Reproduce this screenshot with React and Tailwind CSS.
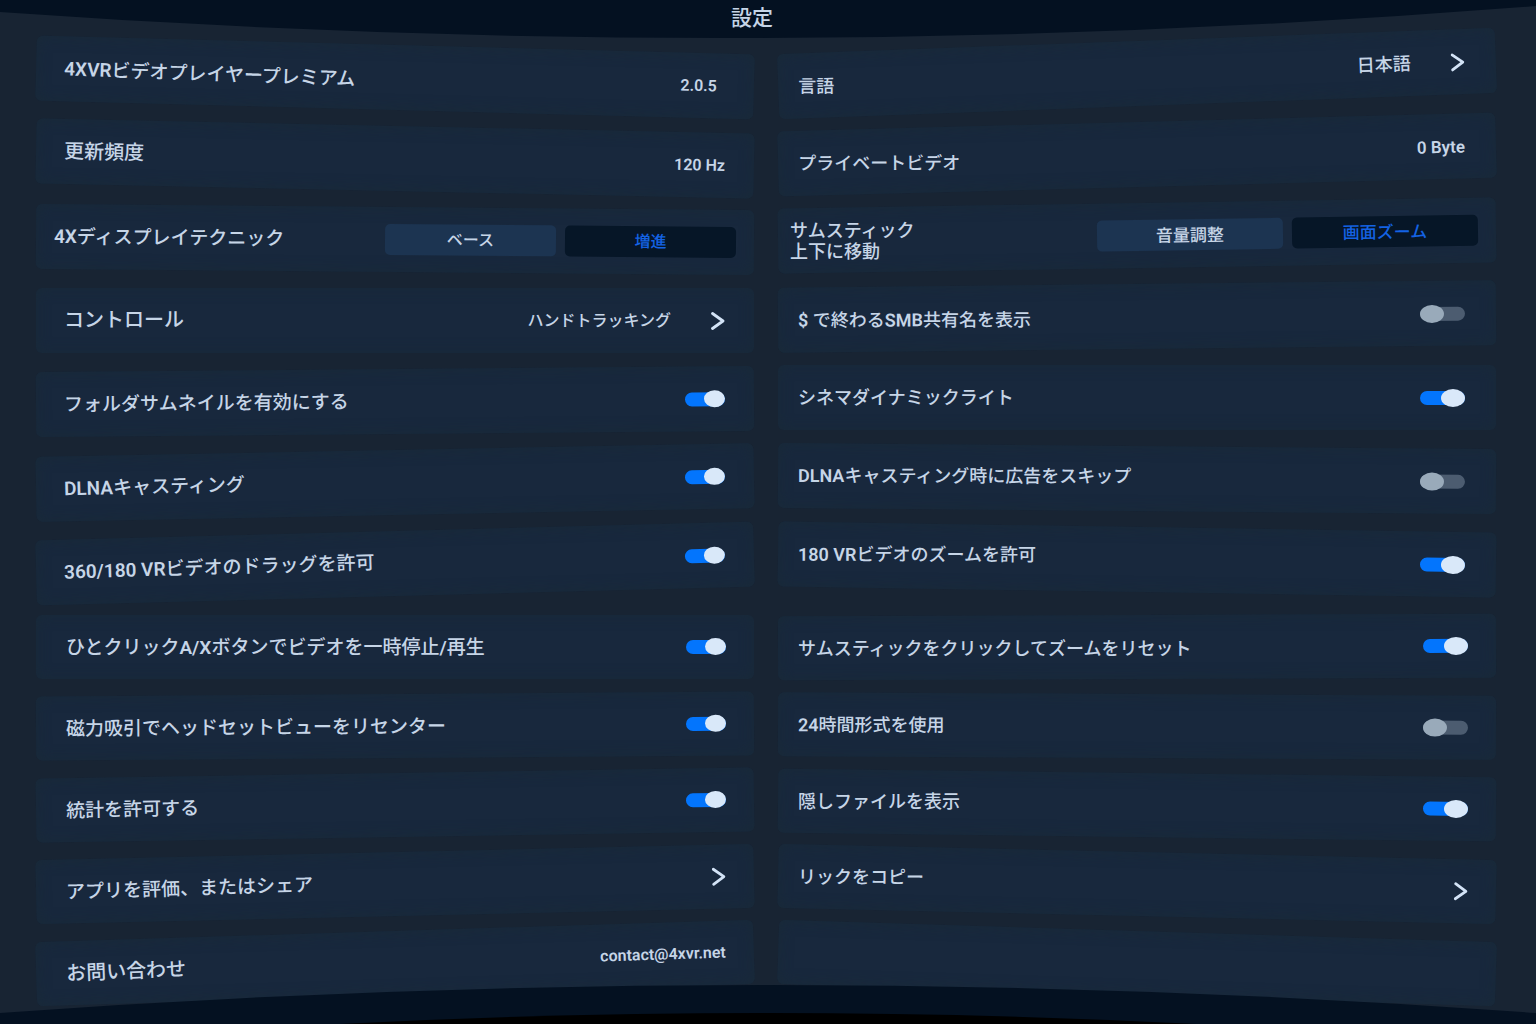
import { useState } from 'react'

// tilt follows the curved screen: rows lean towards the middle of the panel
const upperLeft = [
  { id: 'app', label: '4XVRビデオプレイヤープレミアム', size: 'text-[19px]', tilt: 'rotate-[1.5deg]', bend: 'rotate-[0.5deg]', type: 'text', value: '2.0.5', valueClass: 'text-[16px] mr-2' },
  { id: 'rate', label: '更新頻度', size: 'text-[20px]', tilt: 'rotate-[1.2deg]', type: 'text', value: '120 Hz', valueClass: 'text-[16px]' },
  { id: 'display', label: '4Xディスプレイテクニック', size: 'text-[19px]', tilt: 'rotate-[0.5deg]', type: 'choice', options: ['ベース', '増進'], width: 'w-[171px]', optionSize: 'text-[16px]' },
  { id: 'control', label: 'コントロール', size: 'text-[20px]', tilt: 'rotate-0', type: 'link', value: 'ハンドトラッキング', valueClass: 'text-[16px]' },
  { id: 'thumbs', label: 'フォルダサムネイルを有効にする', size: 'text-[19px]', tilt: 'rotate-[-0.5deg]', type: 'toggle', on: true },
  { id: 'dlna', label: 'DLNAキャスティング', size: 'text-[19px]', tilt: 'rotate-[-1.1deg]', bend: 'rotate-[-0.3deg]', type: 'toggle', on: true },
  { id: 'drag', label: '360/180 VRビデオのドラッグを許可', size: 'text-[19px]', tilt: 'rotate-[-1.5deg]', bend: 'rotate-[-0.3deg]', type: 'toggle', on: true },
]

const upperRight = [
  { id: 'lang', label: '言語', size: 'text-[18px]', tilt: 'rotate-[-2.1deg]', bend: 'rotate-[2deg]', type: 'link', value: '日本語', valueClass: 'text-[18px]' },
  { id: 'private', label: 'プライベートビデオ', size: 'text-[18px]', tilt: 'rotate-[-1.5deg]', bend: 'rotate-[1.3deg]', type: 'text', value: '0 Byte', valueClass: 'text-[17px]' },
  { id: 'stick', label: 'サムスティック\n上下に移動', size: 'text-[18px]', tilt: 'rotate-[-0.9deg]', bend: 'rotate-[0.9deg]', type: 'choice', options: ['音量調整', '画面ズーム'], width: 'w-[186px]', optionSize: 'text-[17px]' },
  { id: 'smb', label: '$ で終わるSMB共有名を表示', size: 'text-[18px]', tilt: 'rotate-[-0.6deg]', bend: 'rotate-[0.5deg]', type: 'toggle', on: false },
  { id: 'cinema', label: 'シネマダイナミックライト', size: 'text-[18px]', tilt: 'rotate-0', type: 'toggle', on: true },
  { id: 'skip', label: 'DLNAキャスティング時に広告をスキップ', size: 'text-[18px]', tilt: 'rotate-[0.5deg]', bend: 'rotate-[-0.4deg]', type: 'toggle', on: false },
  { id: 'zoom', label: '180 VRビデオのズームを許可', size: 'text-[18px]', tilt: 'rotate-[0.9deg]', bend: 'rotate-[-0.8deg]', type: 'toggle', on: true },
]

const lowerLeft = [
  { id: 'pause', label: 'ひとクリックA/Xボタンでビデオを一時停止/再生', size: 'text-[19px]', tilt: 'rotate-0', type: 'toggle', on: true },
  { id: 'recenter', label: '磁力吸引でヘッドセットビューをリセンター', size: 'text-[19px]', tilt: 'rotate-[-0.4deg]', type: 'toggle', on: true },
  { id: 'stats', label: '統計を許可する', size: 'text-[19px]', tilt: 'rotate-[-0.9deg]', bend: 'rotate-[-0.3deg]', type: 'toggle', on: true },
  { id: 'rateapp', label: 'アプリを評価、またはシェア', size: 'text-[19px]', tilt: 'rotate-[-1.3deg]', bend: 'rotate-[-0.4deg]', type: 'link' },
  { id: 'contact', label: 'お問い合わせ', size: 'text-[20px]', tilt: 'rotate-[-1.8deg]', bend: 'rotate-[-0.4deg]', type: 'mail', value: 'contact@4xvr.net' },
]

const lowerRight = [
  { id: 'reset', label: 'サムスティックをクリックしてズームをリセット', size: 'text-[18px]', tilt: 'rotate-[-0.2deg]', bend: 'rotate-[0.2deg]', type: 'toggle', on: true },
  { id: 'clock', label: '24時間形式を使用', size: 'text-[18px]', tilt: 'rotate-[0.3deg]', bend: 'rotate-[-0.2deg]', type: 'toggle', on: false },
  { id: 'hidden', label: '隠しファイルを表示', size: 'text-[18px]', tilt: 'rotate-[0.7deg]', bend: 'rotate-[-0.7deg]', type: 'toggle', on: true },
  { id: 'copy', label: 'リックをコピー', size: 'text-[18px]', tilt: 'rotate-[1.3deg]', bend: 'rotate-[-1.2deg]', type: 'link' },
  { id: 'empty', tilt: 'rotate-[1.8deg]', type: 'empty' },
]

function Chevron() {
  return (
    <svg className="w-[14px] h-5" viewBox="0 0 14 20" fill="none" stroke="#d3e3f6" strokeWidth="2.8" strokeLinecap="round" strokeLinejoin="round">
      <path d="M1.5 2.5 12 10 1.5 17.5" />
    </svg>
  )
}

// latin letters and digits are set heavier than the kana around them
function LabelText({ text }) {
  return text.split(/([A-Za-z0-9/$]+)/).map((part, i)=>(
    i % 2 ? <span key={i} className="font-semibold">{part}</span> : part
  ))
}

function Toggle({ id, on, wide }) {
  const [checked, setChecked] = useState(on)
  return (
    <input
      id={id}
      type="checkbox"
      role="switch"
      checked={checked}
      onChange={e=>setChecked(e.target.checked)}
      className={`${wide ? 'w-[45px] before:w-6 before:h-[18px]' : 'w-10 before:w-[21px] before:h-[17px]'} relative appearance-none shrink-0 h-[14px] rounded-full cursor-pointer bg-[#4c5c70] checked:bg-[#0375fd] before:absolute before:-top-[2px] before:left-0 before:rounded-[50%] before:bg-[#99aaba] checked:before:left-auto checked:before:right-0 checked:before:bg-[#d9e8f9]`}
    />
  )
}

function Choice({ id, options, width, optionSize }) {
  const [picked, setPicked] = useState(options[1])
  return (
    <div role="group" aria-labelledby={id} className="flex gap-[9px]">
      {options.map(o=>(
        <button
          key={o}
          aria-pressed={picked===o}
          onClick={()=>setPicked(o)}
          className={`${width} ${optionSize} h-[31px] rounded-[5px] leading-5 ${picked===o ? 'bg-[#061627] text-[#1463e4]' : 'bg-[#1c3451] text-[#c6d5e7]'}`}
        >
          {o}
        </button>
      ))}
    </div>
  )
}

function Row({ row, pad, widePad, height, wide }) {
  const isChoice = row.type === 'choice'
  const text = `${row.size} ${row.bend || ''} origin-left whitespace-pre leading-[21px]`
  return (
    <div className={`${height} ${isChoice ? widePad : pad} ${row.tilt} flex items-center justify-between rounded-md bg-[#18283d] shadow-[inset_0_0_14px_#192a38]`}>
      {row.type === 'toggle' && <label htmlFor={row.id} className={text}><LabelText text={row.label} /></label>}
      {row.type !== 'toggle' && row.label && <span id={row.id} className={text}><LabelText text={row.label} /></span>}
      {row.type === 'text' && <span className={`font-semibold leading-5 ${row.valueClass}`}>{row.value}</span>}
      {row.type === 'mail' && <a href={`mailto:${row.value}`} className="text-[16px] leading-5 font-semibold">{row.value}</a>}
      {isChoice && <Choice id={row.id} options={row.options} width={row.width} optionSize={row.optionSize} />}
      {row.type === 'toggle' && <Toggle id={row.id} on={row.on} wide={wide} />}
      {row.type === 'link' && (
        <button aria-labelledby={row.id} className="flex items-center gap-10">
          {row.value && <span className={row.valueClass}>{row.value}</span>}
          <Chevron />
        </button>
      )}
    </div>
  )
}

function Column({ rows, className, ...rest }) {
  return (
    <div className={`flex flex-col ${className || ''}`}>
      {rows.map(r=><Row key={r.id} row={r} {...rest} />)}
    </div>
  )
}

function App() {
  return (
    <div className="relative min-h-screen overflow-hidden bg-[#182433] text-[#c6d5e7] font-medium font-[Roboto,'Noto_Sans_CJK_JP',sans-serif]">
      <header className="relative h-9 pr-8 flex items-center justify-center">
        <svg className="absolute left-0 top-0 w-full h-10" viewBox="0 0 1536 40" preserveAspectRatio="none">
          <path d="M0 0H1536V6Q768 67 0 12Z" fill="#041121" />
        </svg>
        <h1 className="relative text-[21px] leading-6 font-medium">設定</h1>
      </header>
      <main className="pl-9 pr-10">
        <section className="grid grid-cols-2 gap-x-6">
          <Column rows={upperLeft} className="pt-[9px] gap-4" height="h-[65px]" pad="pl-7 pr-[29px]" widePad="pl-[18px] pr-[18px]" />
          <Column rows={upperRight} className="pt-[5px] gap-4" height="h-[65px]" pad="pl-5 pr-[31px]" widePad="pl-3 pr-[18px]" wide />
        </section>
        <section className="mt-[19px] grid grid-cols-2 gap-x-6">
          <Column rows={lowerLeft} className="gap-[15px]" height="h-16" pad="pl-[30px] pr-7" />
          <Column rows={lowerRight} className="gap-[15px]" height="h-16" pad="pl-5 pr-7" wide />
        </section>
      </main>
      <footer className="absolute bottom-0 left-0 w-full h-10">
        <svg className="w-full h-full" viewBox="0 0 1536 40" preserveAspectRatio="none">
          <path d="M0 40V29Q768 -27 1536 29V40Z" fill="#041121" />
          <path d="M340 40Q768 18 1196 40Z" fill="#000" />
        </svg>
      </footer>
    </div>
  )
}

export default App
